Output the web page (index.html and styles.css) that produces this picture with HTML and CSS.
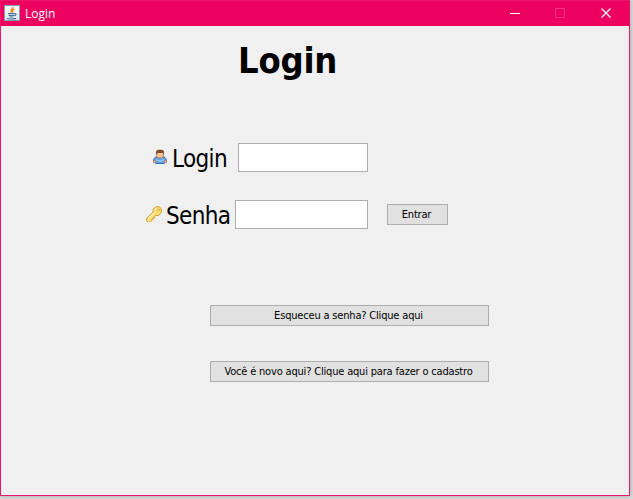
FILE: index.html
```html
<!DOCTYPE html>
<html lang="pt-BR">
<head>
<meta charset="utf-8">
<title>Login</title>
<link rel="stylesheet" href="styles.css">
</head>
<body>
<div class="window">
  <header class="titlebar">
    <svg class="app-icon" viewBox="0 0 16 16">
      <defs><linearGradient id="tile" x2="0" y2="1"><stop stop-color="#fff"/><stop offset="1" stop-color="#d9e2e9"/></linearGradient></defs>
      <rect x=".5" y=".5" width="15" height="15" fill="url(#tile)" stroke="#8799a6"/>
      <path d="M8.800 2c.8 2-3.400 3-1.300 5.600M10.300 4C8 5.400 8.300 6 9 7.500" fill="none" stroke="#ec8b25" stroke-width="1.500"/>
      <path d="M4 8.600h6.500M4.600 10.500h5.400M5.500 12h3.800M10.500 8.800c2.300-.6 2 1.700-.3 2M3 13.500c3 .7 6.500.6 9-.1" fill="none" stroke="#416f94" stroke-width="1.100"/>
    </svg>
    <span class="title">Login</span>
    <div class="controls">
      <svg viewBox="0 0 45 26"><path d="M10 13.500h10" stroke="#fff"/></svg>
      <svg viewBox="0 0 45 26"><rect x="10.500" y="8.500" width="9" height="9" fill="none" stroke="#f3307a"/></svg>
      <svg viewBox="0 0 45 26"><path d="M11.500 8.500l9 9m0-9l-9 9" stroke="#fff" stroke-width="1.200"/></svg>
    </div>
  </header>
  <main class="content">
    <h1>Login</h1>
    <form>
      <div class="row row-login">
        <svg class="icon" viewBox="0 0 16 16">
          <path d="M1.500 12.500C1.500 9.500 3 7.800 5.500 7.500h5c2.500.3 4 2 4 5L12 14.500H4z" fill="#5da2ed" stroke="#3b70bd"/>
          <path d="M4 10.500C6 12.500 10 12.500 12 10.500" fill="none" stroke="#9bccff" stroke-width="1.500"/>
          <rect x="1.300" y="11.500" width="2.400" height="2.400" rx="1" fill="#f2b57d" stroke="#b66e3b" stroke-width=".6"/>
          <rect x="12.300" y="11.500" width="2.400" height="2.400" rx="1" fill="#f2b57d" stroke="#b66e3b" stroke-width=".6"/>
          <path d="M4.500 3.500h7v3.200C11.500 10 4.500 10 4.500 6.700z" fill="#f6c394" stroke="#a9653a" stroke-width=".8"/>
          <path d="M4 5.500V2.800Q4.300.7 6.500.7h3q2.500 0 2.500 2.100v2.700L10.700 4H6z" fill="#874b29"/>
        </svg>
        <label for="login">Login</label>
        <input id="login" type="text">
      </div>
      <div class="row row-senha">
        <svg class="icon" viewBox="0 0 16 16">
          <path d="M7 3.500l3-2.700h3.300L15.400 3v3.500l-3 3H9.700l-1 1v1.300H7.200v1.500H5.700v1.400l-1.400 1.300H1.500L.6 14.400v-2.200L7 6.500z" fill="#ffdf70" stroke="#d59a2c" stroke-linejoin="round"/>
          <path d="M2 13l6.300-6.300M8.500 4.300l2.400-2.200" stroke="#fff6bd" stroke-width="1.200"/>
          <rect x="11.300" y="3" width="2" height="2" rx=".6" fill="#fff" stroke="#c98f28" stroke-width=".7"/>
        </svg>
        <label for="senha">Senha</label>
        <input id="senha" type="password">
        <button class="enter" type="button"><span>Entrar</span></button>
      </div>
    </form>
    <div class="links">
      <button class="forgot" type="button"><span>Esqueceu a senha? Clique aqui</span></button>
      <button class="register" type="button"><span>Você é novo aqui? Clique aqui para fazer o cadastro</span></button>
    </div>
  </main>
</div>
</body>
</html>
```
FILE: styles.css
```css
* { box-sizing: border-box; }
body {
  margin: 0;
  height: 499px;
  overflow: hidden;
  background: #d9d9d9;
  font-family: Tahoma, "DejaVu Sans Condensed", "DejaVu Sans", sans-serif;
  font-stretch: condensed;
  color: #000;
}
.window {
  width: 630px;
  height: 496px;
  border: 1px solid #ee1568;
  background: #f0f0f0;
  box-shadow: 0 0 4px rgba(0, 0, 0, .25);
}
.titlebar {
  display: flex;
  align-items: center;
  height: 25px;
  padding-left: 3px;
  background: #ec0060;
  color: #fff;
}
.app-icon { width: 16px; height: 16px; margin-top: -1px; }
.title {
  margin-left: 5px;
  font: 12px/16px "Open Sans", sans-serif;
}
.controls { display: flex; margin: -1px -6px 0 auto; }
.controls svg { width: 45px; height: 26px; }
.content { padding-top: 13px; }
h1 {
  margin: 0 0 0 237px;
  font-size: 36px;
  line-height: 44px;
  letter-spacing: -.2px;
}
form { padding-top: 60px; }
.row { display: flex; align-items: center; height: 29px; }
.row-login { padding-left: 151px; }
.row-senha { margin-top: 28px; padding-left: 145px; }
.icon { width: 16px; height: 16px; flex: none; margin-top: -2px; }
label {
  margin-left: 4px;
  padding-top: 4px;
  font-size: 24px;
  line-height: 29px;
  letter-spacing: -.65px;
  white-space: nowrap;
}
.row-login label { width: 66px; }
.row-senha label { width: 69px; }
input {
  height: 29px;
  padding: 0 4px;
  border: 1px solid #abadb3;
  background: #fff;
}
.row-login input { width: 130px; }
.row-senha input { width: 133px; }
button {
  display: flex;
  align-items: center;
  justify-content: center;
  height: 21px;
  padding: 0 2px 0 0;
  border: 1px solid #adadad;
  background: #e1e1e1;
  font-family: inherit;
  font-stretch: condensed;
  font-size: 11px;
  line-height: 13px;
  letter-spacing: -.18px;
  color: #000;
  white-space: nowrap;
}
.enter { width: 61px; margin-left: 19px; }
.links {
  display: grid;
  gap: 35px;
  width: 279px;
  margin: 76px 0 0 209px;
}
```
